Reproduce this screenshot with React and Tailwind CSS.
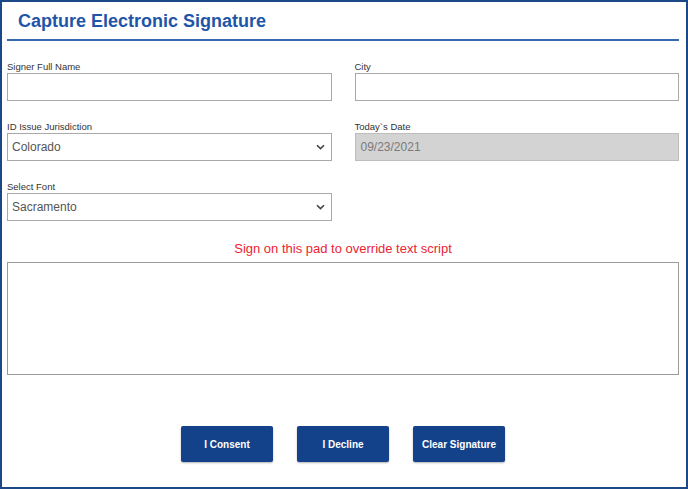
import React from 'react';

const font = { fontFamily: '"Liberation Sans", Arial, sans-serif' };

const Chevron = () => (
  <svg width="9" height="6" viewBox="0 0 9 6" className="absolute right-[6px] top-1/2 -translate-y-1/2">
    <path d="M1 1.2 L4.5 4.6 L8 1.2" fill="none" stroke="#444" strokeWidth="1.6" />
  </svg>
);

const Field = ({ label, children }) => (
  <div className="flex flex-col">
    <label className="text-[9.5px] leading-[13px] text-[#333] h-[13px]">{label}</label>
    {children}
  </div>
);

const TextBox = ({ value, disabled }) => (
  <div
    className={
      disabled
        ? 'h-[28px] border border-[#bdbdbd] bg-[#d3d3d3] pl-[5px] flex items-center text-[12px] text-[#7a7a7a]'
        : 'h-[28px] border border-[#a9a9a9] bg-white pl-[5px] flex items-center text-[12px] text-[#333]'
    }
  >
    {value}
  </div>
);

const SelectBox = ({ value }) => (
  <div className="relative h-[28px] border border-[#a9a9a9] bg-white pl-[4px] flex items-center text-[12px] text-[#555]">
    {value}
    <Chevron />
  </div>
);

const buttons = ['I Consent', 'I Decline', 'Clear Signature'];

export default function App() {
  return (
    <div style={font} className="w-[688px] h-[489px] bg-white border-2 border-[#1d4888] pl-[5px] pr-[7px] flex flex-col">
      {/* Header */}
      <div className="border-b-2 border-[#3769b3] h-[39px] flex items-center pl-[11px] pt-[1px]">
        <h1 className="text-[18px] font-bold text-[#1f55a8]">Capture Electronic Signature</h1>
      </div>

      {/* Form */}
      <div className="grid grid-cols-2 gap-x-[23px] gap-y-[19px] mt-[19px]">
        <Field label="Signer Full Name">
          <TextBox value="" />
        </Field>
        <Field label="City">
          <TextBox value="" />
        </Field>
        <Field label="ID Issue Jurisdiction">
          <SelectBox value="Colorado" />
        </Field>
        <Field label="Today`s Date">
          <TextBox value="09/23/2021" disabled />
        </Field>
        <Field label="Select Font">
          <SelectBox value="Sacramento" />
        </Field>
      </div>

      <p className="text-center text-[13px] text-[#ec2432] mt-[20px] leading-[16px]">
        Sign on this pad to override text script
      </p>

      <div className="h-[113px] border border-[#9a9a9a] mt-[5px]" />

      <div className="flex justify-center gap-[24px] mt-[51px]">
        {buttons.map((b) => (
          <button
            key={b}
            className="w-[92px] h-[36px] bg-[#14428a] text-white text-[10px] font-bold rounded-[2px] shadow-[0_1px_2px_rgba(0,0,0,0.3)]"
          >
            {b}
          </button>
        ))}
      </div>
    </div>
  );
}
